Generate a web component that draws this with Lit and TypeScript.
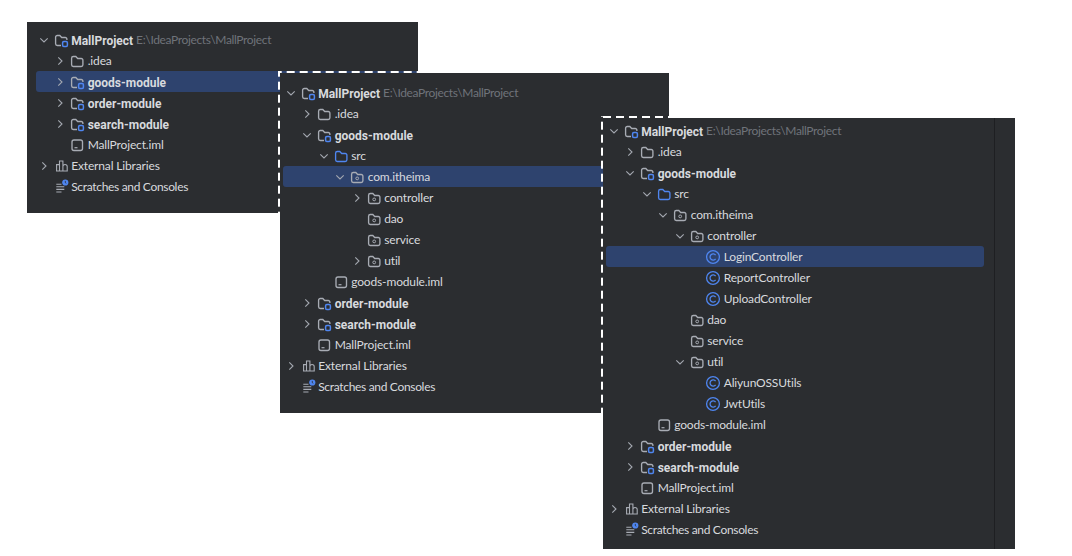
import { LitElement, html, css, svg } from "lit";
import { customElement } from "lit/decorators.js";

type Kind = "module" | "folder" | "src" | "pkg" | "file" | "libs" | "scratch" | "class";
interface Row {
  t: string;
  l: number;
  k: Kind;
  c?: "open" | "closed";
  b?: boolean;
  sel?: boolean;
  hint?: string;
}

const ROOT: Row = { t: "MallProject", l: 0, k: "module", c: "open", b: true, hint: "E:\\IdeaProjects\\MallProject" };
const EXT: Row = { t: "External Libraries", l: 0, k: "libs", c: "closed" };
const SCR: Row = { t: "Scratches and Consoles", l: 0, k: "scratch" };
const IDEA: Row = { t: ".idea", l: 1, k: "folder", c: "closed" };
const ORDER: Row = { t: "order-module", l: 1, k: "module", c: "closed", b: true };
const SEARCH: Row = { t: "search-module", l: 1, k: "module", c: "closed", b: true };
const IML: Row = { t: "MallProject.iml", l: 1, k: "file" };

const PANELS: { cls: string; rows: Row[]; scroll?: boolean }[] = [
  {
    cls: "p1",
    rows: [ROOT, IDEA, { t: "goods-module", l: 1, k: "module", c: "closed", b: true, sel: true }, ORDER, SEARCH, IML, EXT, SCR],
  },
  {
    cls: "p2 dashed",
    rows: [
      ROOT, IDEA,
      { t: "goods-module", l: 1, k: "module", c: "open", b: true },
      { t: "src", l: 2, k: "src", c: "open" },
      { t: "com.itheima", l: 3, k: "pkg", c: "open", sel: true },
      { t: "controller", l: 4, k: "pkg", c: "closed" },
      { t: "dao", l: 4, k: "pkg" },
      { t: "service", l: 4, k: "pkg" },
      { t: "util", l: 4, k: "pkg", c: "closed" },
      { t: "goods-module.iml", l: 2, k: "file" },
      ORDER, SEARCH, IML, EXT, SCR,
    ],
  },
  {
    cls: "p3 dashed",
    scroll: true,
    rows: [
      ROOT, IDEA,
      { t: "goods-module", l: 1, k: "module", c: "open", b: true },
      { t: "src", l: 2, k: "src", c: "open" },
      { t: "com.itheima", l: 3, k: "pkg", c: "open" },
      { t: "controller", l: 4, k: "pkg", c: "open" },
      { t: "LoginController", l: 5, k: "class", sel: true },
      { t: "ReportController", l: 5, k: "class" },
      { t: "UploadController", l: 5, k: "class" },
      { t: "dao", l: 4, k: "pkg" },
      { t: "service", l: 4, k: "pkg" },
      { t: "util", l: 4, k: "pkg", c: "open" },
      { t: "AliyunOSSUtils", l: 5, k: "class" },
      { t: "JwtUtils", l: 5, k: "class" },
      { t: "goods-module.iml", l: 2, k: "file" },
      ORDER, SEARCH, IML, EXT, SCR,
    ],
  },
];

const FOLDER = "M2.6 5.2a1.7 1.7 0 0 1 1.7-1.7h2.5l1.9 2h3.5a1.7 1.7 0 0 1 1.7 1.7v4.6a1.7 1.7 0 0 1-1.7 1.7H4.3a1.7 1.7 0 0 1-1.7-1.7z";

function icon(k: Kind) {
  const g = "#a8acb4";
  const b = "#4f86f0";
  const w = "1.35";
  let body;
  switch (k) {
    case "module":
      body = svg`<path d="M13.9 8V7.2a1.7 1.7 0 0 0-1.7-1.7H8.7l-1.9-2H4.3a1.7 1.7 0 0 0-1.7 1.7v6.6a1.7 1.7 0 0 0 1.7 1.7H8" fill="none" stroke=${g} stroke-width=${w}/>
        <rect x="9.6" y="9.6" width="4.8" height="4.8" rx="1.2" fill="none" stroke=${b} stroke-width="1.5"/>`;
      break;
    case "folder":
      body = svg`<path d=${FOLDER} fill="none" stroke=${g} stroke-width=${w}/>`;
      break;
    case "src":
      body = svg`<path d=${FOLDER} fill="none" stroke=${b} stroke-width=${w}/>`;
      break;
    case "pkg":
      body = svg`<path d=${FOLDER} fill="none" stroke=${g} stroke-width=${w}/><circle cx="8.2" cy="9.4" r="1.4" fill="none" stroke=${g}/>`;
      break;
    case "file":
      body = svg`<rect x="3" y="3" width="10.5" height="10.5" rx="2" fill="none" stroke=${g} stroke-width=${w}/><path d="M5.5 10.7h3" stroke=${g} stroke-width="1.2"/>`;
      break;
    case "libs":
      body = svg`<path d="M3.6 13V6.6h2.9V13M6.5 13V3h3.4v10M9.9 13V8.6a2 2 0 0 1 4.3 0V13M3 13h11.8" fill="none" stroke=${g} stroke-width="1.1"/>`;
      break;
    case "scratch":
      body = svg`<path d="M3.3 5.2h5.2M3.3 7.8h8M3.3 10.4h8M3.3 13h5.2" fill="none" stroke=${g} stroke-width="1.1"/>
        <circle cx="12.3" cy="3.5" r="3.1" fill=${b}/><path d="M12.3 1.9v1.8l1 .6" fill="none" stroke="#2b2d30" stroke-width=".8"/>`;
      break;
    case "class":
      body = svg`<circle cx="8" cy="8" r="6.4" fill="none" stroke=${b} stroke-width="1.3"/>
        <path d="M10.6 6.1A3.1 3.1 0 1 0 10.6 9.9" fill="none" stroke=${b} stroke-width="1.3"/>`;
      break;
  }
  return html`<svg class="ic" viewBox="0 0 16 16" width="16" height="16">${body}</svg>`;
}

function chevron(c?: "open" | "closed") {
  if (!c) return html`<span class="chev"></span>`;
  const d = c === "open" ? "M4.3 6.3l3.7 3.7 3.7-3.7" : "M6.3 4.3l3.7 3.7-3.7 3.7";
  return html`<span class="chev"><svg viewBox="0 0 16 16" width="16" height="16"><path d=${d} fill="none" stroke="#a4a8b0" stroke-width="1.1"/></svg></span>`;
}

@customElement("app-root")
export class AppRoot extends LitElement {
  static styles = css`
    :host {
      display: block;
      position: relative;
      width: 1072px;
      height: 556px;
      background: #fff;
      overflow: hidden;
      font-family: Lato, Roboto, sans-serif;
      font-size: 12px;
      color: #d8dade;
    }
    .panel {
      position: absolute;
      background: #2b2d30;
      box-sizing: border-box;
    }
    .p1 { left: 27px; top: 22px; width: 391px; height: 191px; padding: 7px 0 0 9px; }
    .p2 { left: 280px; top: 73px; width: 389px; height: 340px; padding: 9px 0 0 3px; }
    .p3 { left: 603px; top: 118px; width: 412px; height: 431px; padding: 2px 31px 0 3px; }
    .dashed::before,
    .dashed::after {
      content: "";
      position: absolute;
      left: -2px;
      top: -2px;
    }
    .dashed::before {
      width: calc(100% + 2px);
      height: 2px;
      background-image: linear-gradient(90deg, #fff 8px, transparent 8px);
      background-size: 13px 100%;
    }
    .dashed::after {
      width: 2px;
      height: calc(100% + 2px);
      background-image: linear-gradient(180deg, #fff 8px, transparent 8px);
      background-size: 100% 13px;
    }
    .p2::before { background-position: 8.7px 0; }
    .p2::after { background-position: 0 10.7px; }
    .p3::before { background-position: 2px 0; }
    .p3::after { background-position: 0 5.7px; }
    .scrollline {
      position: absolute;
      top: 0;
      bottom: 0;
      left: 391px;
      width: 1px;
      background: #1e1f22;
    }
    .row {
      display: flex;
      align-items: center;
      height: 21px;
      white-space: nowrap;
      border-radius: 3px;
      box-sizing: border-box;
    }
    .row.sel { background: #2e436e; }
    .chev { flex: none; width: 15px; height: 16px; display: flex; justify-content: center; }
    .chev svg { flex: none; }
    .ic { flex: none; margin-left: 1.7px; margin-right: 2.5px; }
    .label { letter-spacing: -0.15px; }
    .label.b {
      position: relative;
      top: 1px;
      letter-spacing: 0;
      font-family: Roboto, sans-serif;
      font-weight: 700;
    }
    .label.tight { letter-spacing: -0.32px; }
    .label.hint { color: #6f737a; margin-left: 3px; letter-spacing: -0.36px; }
  `;

  render() {
    return html`${PANELS.map(
      (p) => html`<div class="panel ${p.cls}">
        ${p.scroll ? html`<div class="scrollline"></div>` : ""}
        ${p.rows.map(
          (r) => html`<div class="row ${r.sel ? "sel" : ""}" style="padding-left:${r.l * 16.5}px">
            ${chevron(r.c)}${icon(r.k)}<span class="label ${r.b ? "b" : ""} ${r.k === "scratch" ? "tight" : ""}">${r.t}</span>${r.hint
              ? html`<span class="label hint">${r.hint}</span>`
              : ""}
          </div>`
        )}
      </div>`
    )}`;
  }
}
